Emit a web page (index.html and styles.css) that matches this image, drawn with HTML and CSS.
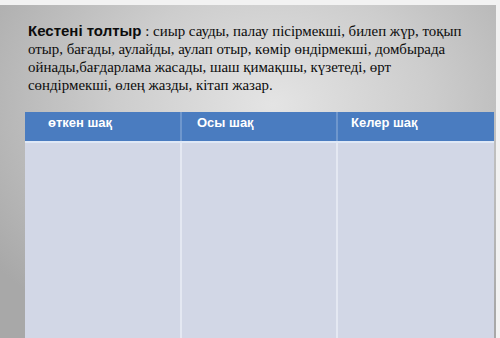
FILE: index.html
```html
<!DOCTYPE html>
<html>
<head>
<meta charset="utf-8">
<link rel="stylesheet" href="styles.css">
</head>
<body>
<div class="frame">
  <div class="slide">
    <p class="task"><span class="lead">Кестені толтыр</span> : сиыр сауды, палау пісірмекші, билеп жүр, тоқып<br>отыр, бағады, аулайды, аулап отыр, көмір өндірмекші, домбырада<br>ойнады,бағдарлама жасады, шаш қимақшы, күзетеді, өрт<br>сөндірмекші, өлең жазды, кітап жазар.</p>
    <div class="table">
      <div class="head">
        <div class="th c1">өткен шақ</div>
        <div class="th c2">Осы  шақ</div>
        <div class="th c3">Келер шақ</div>
      </div>
      <div class="body">
        <div class="td"></div>
        <div class="td"></div>
        <div class="td"></div>
      </div>
    </div>
  </div>
</div>
</body>
</html>
```

FILE: styles.css
```css
html, body {
  margin: 0;
  padding: 0;
  width: 500px;
  height: 338px;
  overflow: hidden;
  background: #f2f2f2;
}
.frame {
  padding-top: 5px;
  padding-right: 4px;
  height: 333px;
}
.slide {
  height: 333px;
  background: radial-gradient(ellipse 70% 80% at 55% 30%, #e4e4e4 0%, #cdcdcd 45%, #a8a8a8 100%);
  display: flex;
  flex-direction: column;
  padding-left: 25px;
  padding-right: 2px;
}
.task {
  margin: 17px 0 0 3px;
  font-family: "Liberation Serif", "DejaVu Serif", serif;
  font-size: 14.9px;
  line-height: 18px;
  color: #0c0c0c;
  white-space: nowrap;
}
.lead {
  font-family: "Liberation Sans", Arial, sans-serif;
  font-weight: bold;
  font-size: 15px;
}
.table {
  margin-top: 18px;
  flex: 1;
  display: flex;
  flex-direction: column;
}
.head {
  display: grid;
  grid-template-columns: 157px 156px 1fr;
  height: 29px;
  background: #4a7cc0;
  border-bottom: 2px solid #dfe8f6;
}
.th {
  font-family: "Liberation Sans", Arial, sans-serif;
  font-weight: bold;
  font-size: 13px;
  color: #fff;
  padding-top: 3px;
  border-right: 2px solid #6f97cd;
}
.th.c1 { padding-left: 23px; }
.th.c2 { padding-left: 15px; }
.th.c3 { padding-left: 13px; border-right: none; }
.body {
  flex: 1;
  display: grid;
  grid-template-columns: 157px 156px 1fr;
  background: #d2d7e6;
}
.td {
  border-right: 2px solid #e4e8f2;
}
.td:last-child { border-right: none; }
```
